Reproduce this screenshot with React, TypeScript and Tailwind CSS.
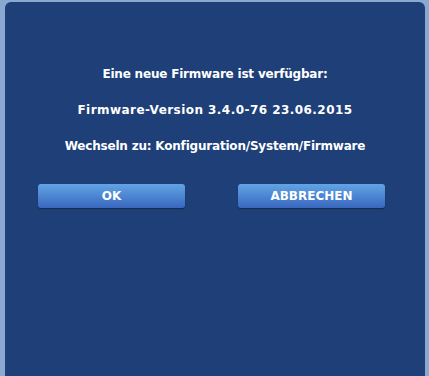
import React from 'react';

const App = () => {
  return (
    <div className="h-[376px] w-full bg-[#8aa8d0] pl-[5px] pr-[4px] pt-[2px] overflow-hidden">
      <div
        className="h-full rounded-t-[6px] bg-[#1e3f78] flex flex-col items-center text-white"
        style={{ fontFamily: '"DejaVu Sans", sans-serif' }}
      >
        <div className="mt-[64px] flex flex-col items-center gap-[19px] text-[12px] leading-[17px] font-bold tracking-[-0.2px]">
          <p>Eine neue Firmware ist verfügbar:</p>
          <p className="tracking-[0.45px]">Firmware-Version 3.4.0-76 23.06.2015</p>
          <p>Wechseln zu: Konfiguration/System/Firmware</p>
        </div>
        <div className="mt-[29px] w-full flex justify-between pl-[33px] pr-[40px]">
          <button className="w-[147px] h-[24px] rounded-[3px] bg-gradient-to-b from-[#62a4e6] to-[#3967be] text-[12px] font-bold shadow-[0_1px_1px_rgba(0,0,0,0.35)]">
            OK
          </button>
          <button className="w-[147px] h-[24px] rounded-[3px] bg-gradient-to-b from-[#62a4e6] to-[#3967be] text-[12px] font-bold shadow-[0_1px_1px_rgba(0,0,0,0.35)]">
            ABBRECHEN
          </button>
        </div>
      </div>
    </div>
  );
};

export default App;
